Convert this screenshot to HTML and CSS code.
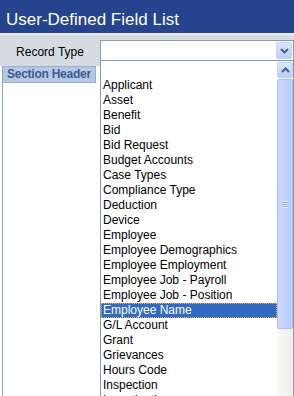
FILE: index.html
```html
<!DOCTYPE html>
<html lang="en">
<head>
    <meta charset="UTF-8">
    <meta name="viewport" content="width=device-width, initial-scale=1.0">
    <title>User-Defined Field List</title>
    <link rel="stylesheet" href="styles.css">
</head>
<body>
    <div class="page">
        <div class="title">User-Defined Field List</div>

        <div class="filter-row">
            <label class="filter-label">Record Type</label>
            <div class="fake-select">
                <span class="select-btn">
                    <svg width="9" height="6" viewBox="0 0 9 6"><path d="M1 1 L4.5 4.5 L8 1" stroke="#4d6185" stroke-width="2" fill="none"/></svg>
                </span>
            </div>
        </div>

        <div class="side-panel">
            <div class="section-header">Section Header</div>
        </div>

        <!-- open drop down list of the Record Type select -->
        <div class="dropdown">
            <div class="options">
                <div class="option"></div>
                <div class="option">Applicant</div>
                <div class="option">Asset</div>
                <div class="option">Benefit</div>
                <div class="option">Bid</div>
                <div class="option">Bid Request</div>
                <div class="option">Budget Accounts</div>
                <div class="option">Case Types</div>
                <div class="option">Compliance Type</div>
                <div class="option">Deduction</div>
                <div class="option">Device</div>
                <div class="option">Employee</div>
                <div class="option">Employee Demographics</div>
                <div class="option">Employee Employment</div>
                <div class="option">Employee Job - Payroll</div>
                <div class="option">Employee Job - Position</div>
                <div class="option selected">Employee Name</div>
                <div class="option">G/L Account</div>
                <div class="option">Grant</div>
                <div class="option">Grievances</div>
                <div class="option">Hours Code</div>
                <div class="option">Inspection</div>
                <div class="option">Investigation</div>
            </div>
            <div class="scrollbar">
                <div class="scroll-btn">
                    <svg width="9" height="6" viewBox="0 0 9 6"><path d="M1 5 L4.5 1.5 L8 5" stroke="#4d6185" stroke-width="2" fill="none"/></svg>
                </div>
                <div class="scroll-thumb">
                    <span class="grip"></span>
                </div>
            </div>
        </div>
    </div>
</body>
</html>
```

FILE: styles.css
```css
body {
    margin: 0;
    font-family: "Liberation Sans", Arial, sans-serif;
    font-size: 12px;
    color: #000;
    background: #fff;
    overflow: hidden;
}
.page {
    position: relative;
    height: 396px;
    overflow: hidden;
}
.title {
    background: #26438e;
    color: #fff;
    font-size: 17px;
    line-height: 20px;
    height: 23px;
    padding: 10px 0 0 6px;
}
.filter-row {
    display: flex;
    align-items: flex-start;
    background: #d5dae3;
    border-top: 2px solid #e9ecf2;
    padding: 5px 0 4px 0;
}
.filter-label {
    width: 100px;
    text-align: center;
    line-height: 19px;
    padding-top: 3px;
}
.fake-select {
    flex: 1;
    height: 19px;
    border: 1px solid #7f9db9;
    background: #fff;
    display: flex;
    justify-content: flex-end;
}
.select-btn {
    width: 16px;
    height: 17px;
    margin: 1px 1px 1px 0;
    box-sizing: border-box;
    border: 1px solid #c3d3fa;
    border-radius: 2px;
    background: linear-gradient(to bottom, #dce6fd, #bccdf7);
    display: flex;
    align-items: center;
    justify-content: center;
}
.side-panel {
    margin-left: 2px;
    height: 330px;
    border-left: 1px solid #8ea3cb;
}
.section-header {
    width: 88px;
    border: 1px solid #98add2;
    border-left: none;
    background: #b7c8e3;
    color: #3b5a96;
    font-weight: bold;
    line-height: 15px;
    padding-left: 4px;
    letter-spacing: -0.25px;
    white-space: nowrap;
}
.dropdown {
    position: absolute;
    left: 100px;
    top: 61px;
    bottom: 0;
    width: 192px;
    border-left: 1px solid #7f9db9;
    border-right: 1px solid #7f9db9;
    background: #fff;
    display: flex;
}
.options {
    flex: 1;
    padding-top: 2px;
}
.option {
    height: 15px;
    line-height: 15px;
    padding-left: 2px;
    white-space: nowrap;
    overflow: hidden;
}
.option.selected {
    background: #316ac5;
    color: #fff;
    outline: 1px dotted #e8b04a;
    outline-offset: -1px;
}
.scrollbar {
    width: 16px;
    background: linear-gradient(to right, #f9f8f4, #efeee7);
    display: flex;
    flex-direction: column;
}
.scroll-btn {
    height: 16px;
    margin-top: 1px;
    box-sizing: border-box;
    border: 1px solid #c3d3fa;
    border-radius: 2px;
    background: linear-gradient(to bottom, #dce6fd, #bccdf7);
    display: flex;
    align-items: center;
    justify-content: center;
}
.scroll-thumb {
    height: 250px;
    margin-top: 1px;
    box-sizing: border-box;
    border: 1px solid #a9bdf0;
    border-radius: 2px;
    background: linear-gradient(to right, #cddafd, #b9cbf8);
    display: flex;
    align-items: center;
    justify-content: center;
}
.grip {
    width: 6px;
    height: 7px;
    background: repeating-linear-gradient(to bottom, #eef3fe 0, #eef3fe 1px, #8ea8e4 1px, #8ea8e4 2px);
}
```
